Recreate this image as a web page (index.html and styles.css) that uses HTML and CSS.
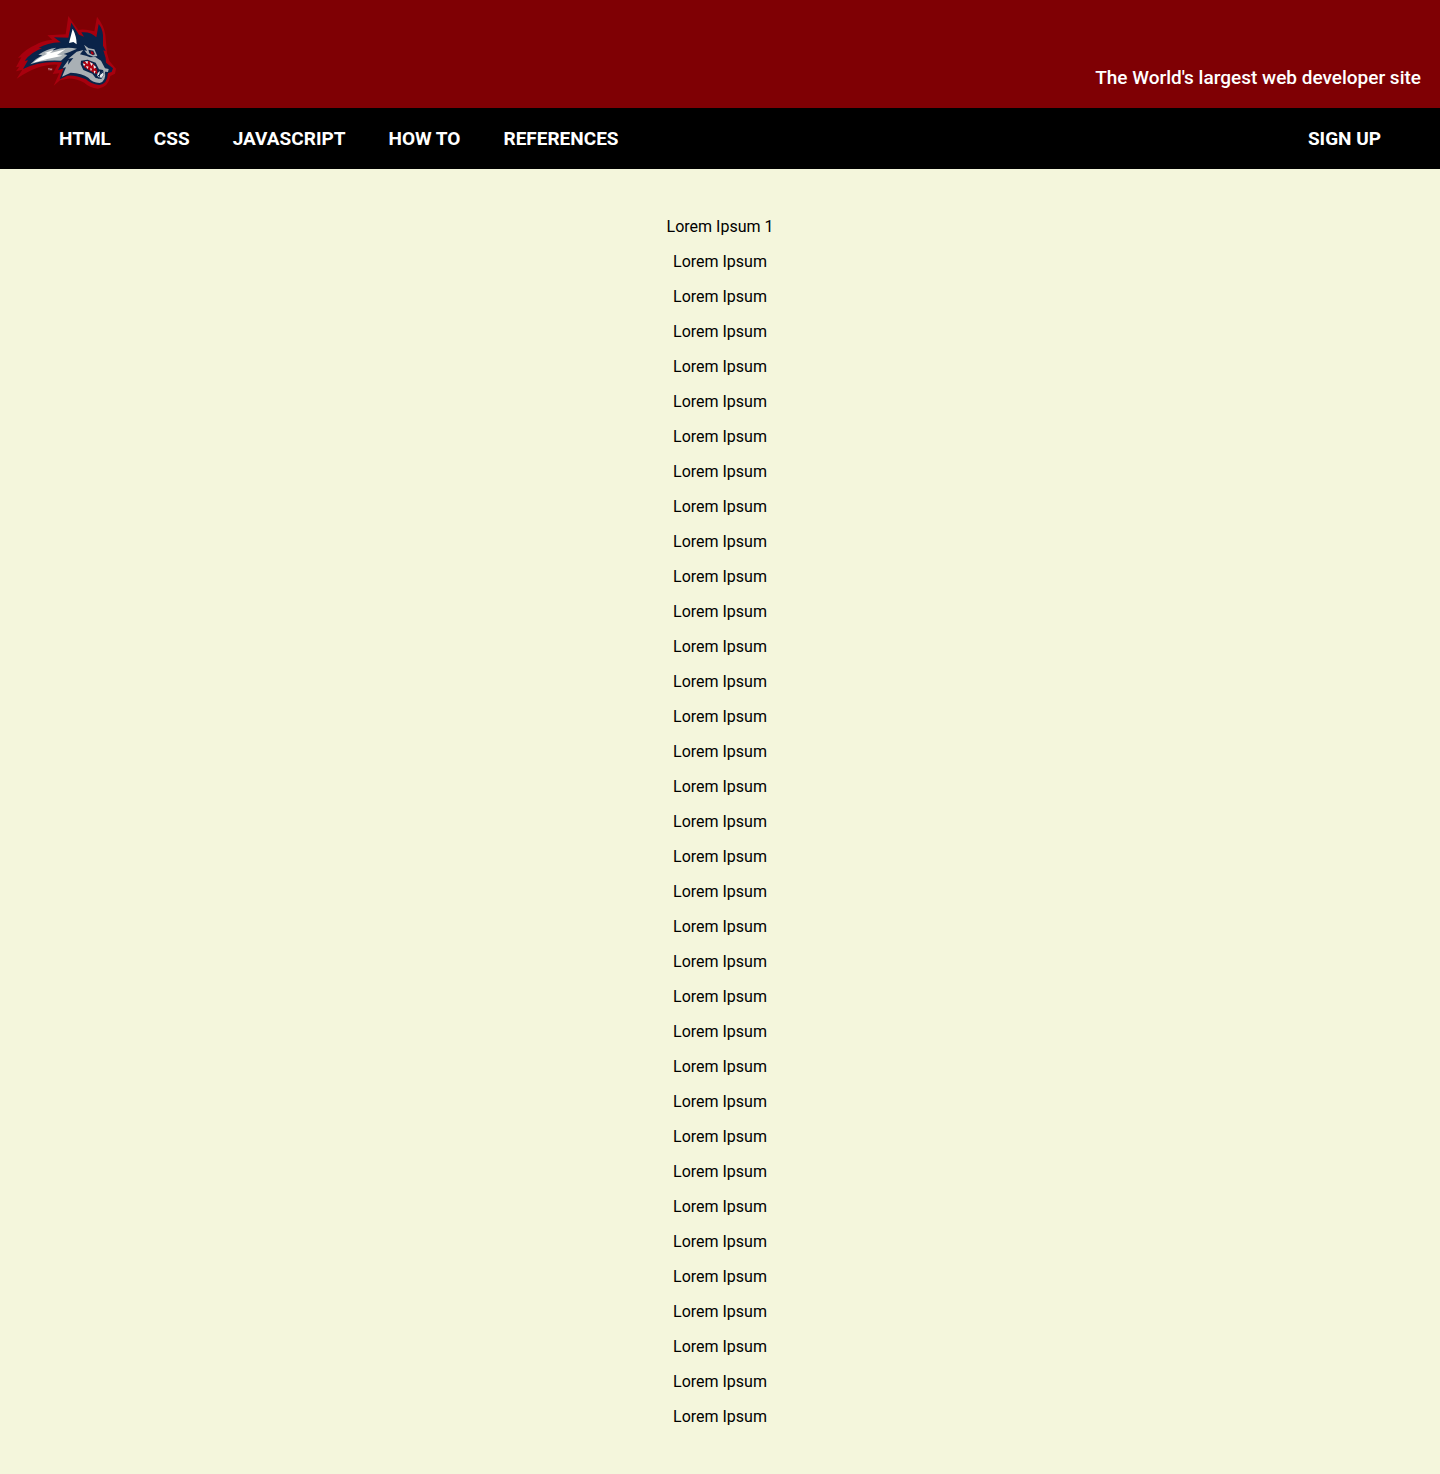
FILE: index.html
```html
<!DOCTYPE html>
<html lang="en">
<head>
<meta charset="utf-8">
<meta name="viewport" content="width=device-width, initial-scale=1">
<title>Web Developer Site</title>
<link rel="stylesheet" href="styles.css">
</head>
<body>
<header class="header">
  <svg class="logo" viewBox="42 42 312 234" role="img" aria-label="Wolf logo">
    <path fill="#a8000e" d="M48 202 64 172 54 174 Q76 147 106 135 Q123 123 157 119 L142 106 197 103 205 48 235 90 Q252 86 283 94 L291 50 Q312 77 316 104 L321 160 328 183 348 206 345 221 331 228 Q325 262 294 266 Q268 263 253 248 Q223 234 203 236 L180 241 161 257 178 220 158 222 173 194 Q119 190 50 236 L67 209 48 214 58 200Z"/>
    <path fill="#0a2349" d="M69 207 84 181 74 182 Q95 156 126 145 L116 144 Q140 129 182 127 L162 112 205 113 214 68 237 104 252 110 244 97 Q272 94 289 112 L296 72 Q308 87 309 106 L309 137 317 153 310 151 317 174 318 188 339 205 335 216 324 219 Q322 252 298 255 Q272 252 258 238 Q225 224 202 227 L179 238 191 205 174 211 186 187 Q121 181 69 207Z"/>
    <path fill="#a9b0b5" d="M91 193 Q109 174 127 166 L115 164 Q141 146 169 143 L154 153 Q194 138 231 146 L207 157 191 162 202 165 183 182 Q125 179 91 193Z"/>
    <path fill="#fff" d="M99 188 Q119 171 142 161 L134 159 162 149 149 160 196 148 171 165 188 167 Q145 175 99 188ZM207 129 218 86 Q230 109 230 133 L220 126Z"/>
    <path fill="#a9b0b5" d="M186 230 198 202 188 204 206 179 204 194 220 174 205 176 230 155 250 150 240 163 258 167 270 172 286 171 303 182 315 205 326 207 324 216 315 215 Q319 243 299 249 Q276 247 265 233 Q246 220 212 218ZM252 134 266 145 283 148 292 168 280 170 262 163 253 151 261 153Z"/>
    <path fill="#0a2349" d="m243 182 20-3 24 9 10 20 12 2 4 12-9 15-17-3-10-13-27-11-8-17z"/>
    <path fill="#b0000f" d="m249 185 18-2 16 11 8 16 1 12-14-5-25-15z"/>
    <path fill="#0a2349" d="m265 149 15 3 5 11-6 3-11-6z"/>
    <path fill="#b0000f" d="m272 153 8 3 1 9-8-4z"/>
    <path fill="#e8eaec" d="m248 190 8 3-4 6zm10 8 8 2-4 7zm12 7 6 1-3 8zm11 7 6 1-4 9zM255 184l7 9 2-9zm14 2 5 12 5-7zm11 8 2 12 7-4zm13 26 6-7 2 9 9-8 1 10-6 9-10-1-4-4z"/>
    <path fill="none" stroke="#0a2349" stroke-width="3" d="M302 211l-6 25M291 230l19-14"/>
    <path fill="none" stroke="#d8a5ac" stroke-width="2" d="M144 206h5m-2 0v5m4 0v-5l2 3 2-3v5"/>
  </svg>
  <p class="tagline">The World's largest web developer site</p>
</header>
<nav class="nav">
  <a class="nav-link" href="#">HTML</a>
  <a class="nav-link" href="#">CSS</a>
  <a class="nav-link" href="#">JAVASCRIPT</a>
  <a class="nav-link" href="#">HOW TO</a>
  <a class="nav-link" href="#">REFERENCES</a>
  <a class="nav-link nav-signup" href="#">SIGN UP</a>
</nav>
<main class="content">
  <p>Lorem Ipsum 1</p>
  <p>Lorem Ipsum</p>
  <p>Lorem Ipsum</p>
  <p>Lorem Ipsum</p>
  <p>Lorem Ipsum</p>
  <p>Lorem Ipsum</p>
  <p>Lorem Ipsum</p>
  <p>Lorem Ipsum</p>
  <p>Lorem Ipsum</p>
  <p>Lorem Ipsum</p>
  <p>Lorem Ipsum</p>
  <p>Lorem Ipsum</p>
  <p>Lorem Ipsum</p>
  <p>Lorem Ipsum</p>
  <p>Lorem Ipsum</p>
  <p>Lorem Ipsum</p>
  <p>Lorem Ipsum</p>
  <p>Lorem Ipsum</p>
  <p>Lorem Ipsum</p>
  <p>Lorem Ipsum</p>
  <p>Lorem Ipsum</p>
  <p>Lorem Ipsum</p>
  <p>Lorem Ipsum</p>
  <p>Lorem Ipsum</p>
  <p>Lorem Ipsum</p>
  <p>Lorem Ipsum</p>
  <p>Lorem Ipsum</p>
  <p>Lorem Ipsum</p>
  <p>Lorem Ipsum</p>
  <p>Lorem Ipsum</p>
  <p>Lorem Ipsum</p>
  <p>Lorem Ipsum</p>
  <p>Lorem Ipsum</p>
  <p>Lorem Ipsum</p>
  <p>Lorem Ipsum</p>
</main>
</body>
</html>
```
FILE: styles.css
```css
body {
  margin: 0;
  background: #f4f6dc;
  color: #000;
  font: 16px/19px Roboto, sans-serif;
}
.header {
  display: flex;
  justify-content: space-between;
  align-items: flex-end;
  padding: 14px 19px 16px 14px;
  background: #7f0004;
  color: #fff;
}
.logo {
  display: block;
  width: 104px;
  height: 78px;
}
.tagline {
  margin: 0;
  font-size: 19px;
  line-height: 28px;
  font-weight: 500;
}
.nav {
  display: flex;
  gap: 43px;
  padding: 0 59px;
  background: #000;
}
.nav-link {
  color: #fff;
  font-size: 19px;
  line-height: 61px;
  font-weight: 700;
  text-decoration: none;
}
.nav-signup {
  margin-left: auto;
}
.content {
  padding: 48px 16px;
  text-align: center;
}
.content p {
  margin: 0 0 16px;
}
.content p:last-child {
  margin-bottom: 0;
}
```
